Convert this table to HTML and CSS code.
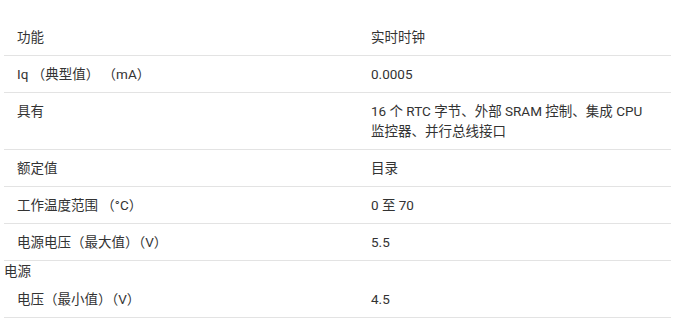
FILE: index.html
```html
<!DOCTYPE html>
<html lang="zh-CN">
<head>
<meta charset="utf-8">
<link rel="stylesheet" href="styles.css">
</head>
<body>
<div class="spec">
  <div class="row"><div class="cell">功能</div><div class="cell">实时时钟</div></div>
  <div class="row"><div class="cell">Iq （典型值） （mA）</div><div class="cell">0.0005</div></div>
  <div class="row"><div class="cell">具有</div><div class="cell">16 个 RTC 字节、外部 SRAM 控制、集成 CPU 监控器、并行总线接口</div></div>
  <div class="row"><div class="cell">额定值</div><div class="cell">目录</div></div>
  <div class="row"><div class="cell">工作温度范围 （°C）</div><div class="cell">0 至 70</div></div>
  <div class="row"><div class="cell">电源电压（最大值）（V）</div><div class="cell">5.5</div></div>
  <div class="group-label">电源</div>
  <div class="row"><div class="cell">电压（最小值）（V）</div><div class="cell">4.5</div></div>
</div>
</body>
</html>
```
FILE: styles.css
```css
html, body {
  margin: 0;
  padding: 0;
  background: #fff;
}
body {
  padding: 19px 18px 0 4px;
  font-family: Roboto, "Noto Sans CJK SC", sans-serif;
  font-size: 13.5px;
  line-height: 20px;
  color: #333;
}
.spec {
  width: 667px;
}
.row {
  display: grid;
  grid-template-columns: 354px 1fr;
  border-bottom: 1px solid #e3e3e3;
}
.cell {
  padding: 8px 13px;
}
.cell + .cell {
  padding-right: 20px;
}
.group-label {
  line-height: 20px;
}
```
